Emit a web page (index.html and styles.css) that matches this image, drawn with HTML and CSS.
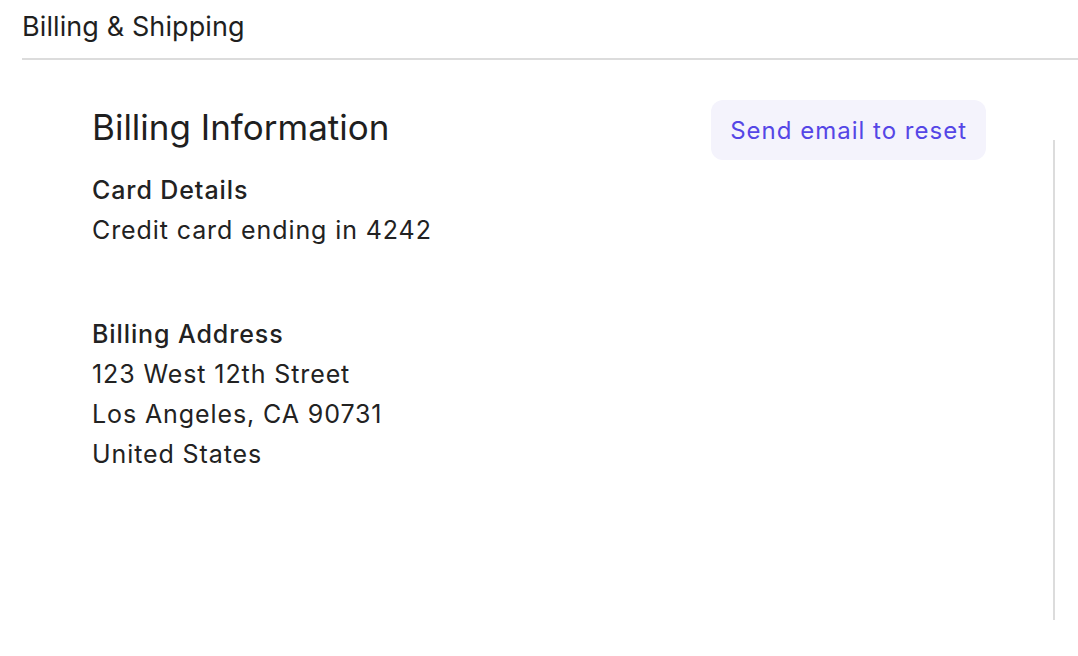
FILE: index.html
```html
<!DOCTYPE html>
<html>
<head>
<meta charset="utf-8">
<link rel="stylesheet" href="styles.css">
</head>
<body>
<div class="page">
  <header class="topbar">
    <h1 class="title">Billing &amp; Shipping</h1>
  </header>
  <main class="content">
    <section class="panel">
      <div class="panel-head">
        <h2 class="panel-title">Billing Information</h2>
        <button class="reset-btn">Send email to reset</button>
      </div>
      <div class="group group-card">
        <div class="label">Card Details</div>
        <div class="line">Credit card ending in 4242</div>
      </div>
      <div class="group group-address">
        <div class="label">Billing Address</div>
        <div class="line">123 West 12th Street</div>
        <div class="line">Los Angeles, CA 90731</div>
        <div class="line">United States</div>
      </div>
    </section>
    <div class="rail"></div>
  </main>
</div>
</body>
</html>
```
FILE: styles.css
```css
* { box-sizing: border-box; }
html, body { margin: 0; padding: 0; background: #fff; }
body {
  font-family: Inter, "Noto Sans", sans-serif;
  color: #222;
  width: 1078px;
  height: 656px;
  overflow: hidden;
}
.page { padding-left: 22px; }
.topbar {
  height: 60px;
  border-bottom: 2px solid #dcdcdc;
  display: flex;
  align-items: flex-start;
}
.title {
  margin: 0;
  padding-top: 11px;
  font-size: 27px;
  line-height: 32px;
  font-weight: 400;
  letter-spacing: 0.1px;
  color: #1f1f1f;
}
.content {
  display: flex;
  padding-left: 70px;
}
.panel {
  width: 894px;
  padding-top: 40px;
}
.panel-head {
  display: flex;
  justify-content: space-between;
  align-items: flex-start;
}
.panel-title {
  margin: 6px 0 0;
  font-size: 35px;
  line-height: 42px;
  font-weight: 400;
  color: #1f1f1f;
}
.reset-btn {
  font-family: inherit;
  font-size: 24px;
  letter-spacing: 1px;
  color: #5546e6;
  background: #f4f3fc;
  border: none;
  border-radius: 12px;
  height: 60px;
  padding: 0 19px;
}
.group-card { margin-top: 10px; }
.group-address { margin-top: 64px; }
.label, .line {
  font-size: 25px;
  line-height: 40px;
  letter-spacing: 0.9px;
  color: #222;
}
.label { font-weight: 500; }
.rail {
  margin-left: 67px;
  margin-top: 80px;
  width: 2px;
  height: 480px;
  background: #dcdcdc;
}
```
